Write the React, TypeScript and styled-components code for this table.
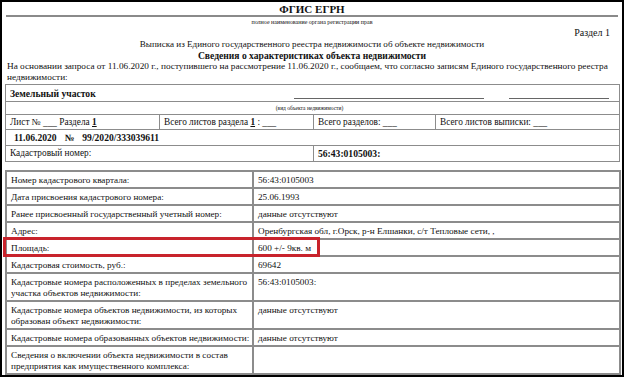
import React from 'react'
import styled, { createGlobalStyle } from 'styled-components'

const GlobalStyle = createGlobalStyle`
  html, body {
    margin: 0;
    padding: 0;
    background: #ffffff;
  }
  body {
    font-family: 'Liberation Serif', 'Times New Roman', serif;
    color: #111;
  }
`

const Page = styled.div`
  width: 624px;
  height: 377px;
  box-sizing: border-box;
  border: 2px solid #000;
  padding: 0 3px 0 3px;
  overflow: hidden;
  font-family: 'Liberation Serif', 'Times New Roman', serif;
  font-size: 9.2px;
`

const Title = styled.div`
  text-align: center;
  font-weight: bold;
  font-size: 11px;
  line-height: 12px;
  padding-top: 1px;
  height: 12px;
`

const Rule = styled.div`
  height: 2px;
  background: #8a8a8a;
  margin: 0 1px 0 1px;
`

const Caption = styled.div`
  text-align: center;
  font-size: 6px;
  line-height: 7px;
  margin-top: 2px;
  height: 7px;
`

const SectionNo = styled.div`
  text-align: right;
  padding-right: 9px;
  font-size: 10px;
  line-height: 11px;
  margin-top: 1px;
`

const Heading = styled.div<{ $bold?: boolean }>`
  text-align: center;
  font-size: ${(p) => (p.$bold ? 9.6 : 9.1)}px;
  font-weight: ${(p) => (p.$bold ? 'bold' : 'normal')};
  line-height: 11px;
  margin-top: ${(p) => (p.$bold ? 0 : 1)}px;
`

const Intro = styled.p`
  margin: 0;
  font-size: 9.25px;
  line-height: 10.5px;
  padding-left: 2px;
`

const Table = styled.table<{ $gap: number }>`
  border-collapse: collapse;
  width: 614px;
  table-layout: fixed;
  font-family: 'Liberation Serif', 'Times New Roman', serif;
  font-size: 9.2px;
  margin-top: ${(p) => p.$gap}px;
`

const Cell = styled.td<{ $bold?: boolean; $h: number }>`
  box-sizing: border-box;
  border: 1.5px solid #8c8c8c;
  padding: 0 4px;
  height: ${(p) => p.$h}px;
  font-weight: ${(p) => (p.$bold ? 'bold' : 'normal')};
  font-size: ${(p) => (p.$bold ? 9.6 : 9.3)}px;
  vertical-align: middle;
  white-space: nowrap;
  line-height: 11px;
`

const KindRow = styled.div`
  display: flex;
  align-items: center;
  height: 15px;
  font-weight: bold;
`

const Blank = styled.span<{ $w: number; $gap: number }>`
  align-self: flex-end;
  width: ${(p) => p.$w}px;
  height: 0;
  border-bottom: 1px solid #666;
  margin-left: ${(p) => p.$gap}px;
  margin-bottom: 2px;
`

const Tiny = styled.div`
  text-align: center;
  font-size: 5.5px;
  line-height: 7px;
  padding-right: 6px;
`

const Under = styled.span`
  text-decoration: underline;
  font-weight: bold;
`

const DocNo = styled.div`
  display: flex;
  gap: 8px;
  padding-left: 4px;
`

const TableWrap = styled.div`
  position: relative;
`

const DataCell = styled.td<{ $h: number }>`
  box-sizing: border-box;
  border: 2px solid #8c8c8c;
  padding: 3px 2px 0 4px;
  height: ${(p) => p.$h}px;
  vertical-align: top;
  line-height: 11px;
`

const Highlight = styled.div`
  position: absolute;
  left: -2px;
  top: 67px;
  width: 311px;
  height: 14px;
  border: 3px solid #c8232c;
  pointer-events: none;
`

type Row = { label: string; value: string; tall?: boolean }

const rows: Row[] = [
  { label: 'Номер кадастрового квартала:', value: '56:43:0105003' },
  { label: 'Дата присвоения кадастрового номера:', value: '25.06.1993' },
  { label: 'Ранее присвоенный государственный учетный номер:', value: 'данные отсутствуют' },
  { label: 'Адрес:', value: 'Оренбургская обл, г.Орск, р-н Елшанки, с/т Тепловые сети, ,' },
  { label: 'Площадь:', value: '600 +/- 9кв. м' },
  { label: 'Кадастровая стоимость, руб.:', value: '69642' },
  {
    label: 'Кадастровые номера расположенных в пределах земельного участка объектов недвижимости:',
    value: '56:43:0105003:',
    tall: true
  },
  {
    label: 'Кадастровые номера объектов недвижимости, из которых образован объект недвижимости:',
    value: 'данные отсутствуют',
    tall: true
  },
  { label: 'Кадастровые номера образованных объектов недвижимости:', value: 'данные отсутствуют' },
  {
    label: 'Сведения о включении объекта недвижимости в состав предприятия как имущественного комплекса:',
    value: '',
    tall: true
  }
]

const App: React.FC = () => {
  return (
    <>
      <GlobalStyle />
      <Page>
        <Title>ФГИС ЕГРН</Title>
        <Rule />
        <Caption>полное наименование органа регистрации прав</Caption>
        <SectionNo>Раздел 1</SectionNo>
        <Heading>Выписка из Единого государственного реестра недвижимости об объекте недвижимости</Heading>
        <Heading $bold>Сведения о характеристиках объекта недвижимости</Heading>
        <Intro>
          На основании запроса от 11.06.2020 г., поступившего на рассмотрение 11.06.2020 г., сообщаем, что согласно записям Единого государственного реестра недвижимости:
        </Intro>

        <Table $gap={2}>
          <colgroup>
            <col style={{ width: 154 }} />
            <col style={{ width: 154 }} />
            <col style={{ width: 122 }} />
            <col style={{ width: 184 }} />
          </colgroup>
          <tbody>
            <tr>
              <Cell colSpan={4} $h={17} $bold>
                <KindRow>
                  <span>Земельный участок</span>
                  <Blank $w={190} $gap={198} />
                  <Blank $w={100} $gap={25} />
                </KindRow>
              </Cell>
            </tr>
            <tr>
              <Cell colSpan={4} $h={13}>
                <Tiny>(вид объекта недвижимости)</Tiny>
              </Cell>
            </tr>
            <tr>
              <Cell $h={15}>
                Лист № ___ Раздела <Under>1</Under>
              </Cell>
              <Cell $h={15}>
                Всего листов раздела <Under>1</Under> : ___
              </Cell>
              <Cell $h={15}>Всего разделов: ___</Cell>
              <Cell $h={15}>Всего листов выписки: ___</Cell>
            </tr>
            <tr>
              <Cell colSpan={4} $bold $h={16}>
                <DocNo>
                  <span>11.06.2020</span>
                  <span>№</span>
                  <span>99/2020/333039611</span>
                </DocNo>
              </Cell>
            </tr>
            <tr>
              <Cell colSpan={2} $h={16}>Кадастровый номер:</Cell>
              <Cell colSpan={2} $bold $h={16}>56:43:0105003:</Cell>
            </tr>
          </tbody>
        </Table>

        <TableWrap>
          <Table $gap={8}>
            <colgroup>
              <col style={{ width: 247 }} />
              <col style={{ width: 367 }} />
            </colgroup>
            <tbody>
              {rows.map((r) => (
                <tr key={r.label}>
                  <DataCell $h={r.tall ? 28 : 17}>{r.label}</DataCell>
                  <DataCell $h={r.tall ? 28 : 17}>{r.value}</DataCell>
                </tr>
              ))}
            </tbody>
          </Table>
          <Highlight />
        </TableWrap>
      </Page>
    </>
  )
}

export default App
